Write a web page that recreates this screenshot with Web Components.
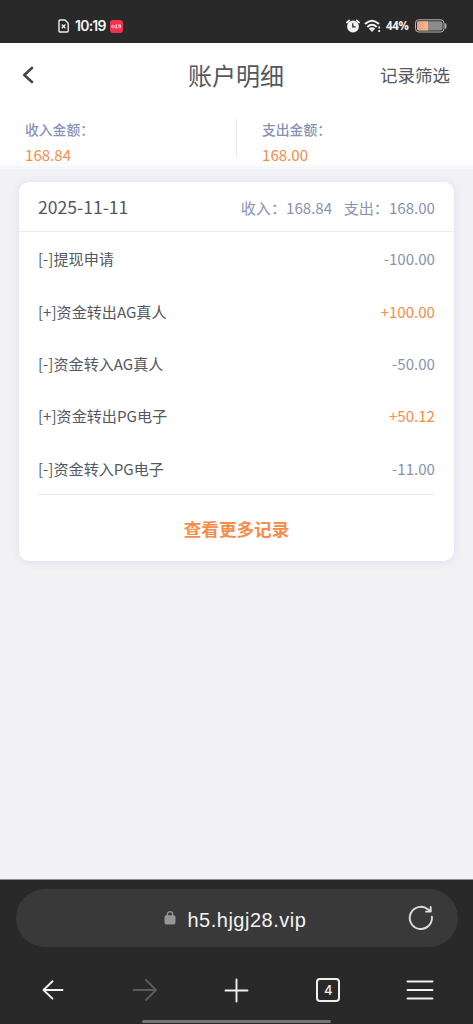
<!DOCTYPE html>
<html lang="zh-CN">
<head>
<meta charset="utf-8">
<meta name="viewport" content="width=device-width, initial-scale=1">
<title>账户明细</title>
<style>
html,body{margin:0;height:100%}
body{font-family:"Noto Sans CJK SC",sans-serif;background:#f2f2f5;color:#54575e;overflow:hidden;
--orange:#f58d4b;--muted:#8a92b4;--line:#ebebef}
</style>
</head>
<body>
<account-app></account-app>
<script>
function define(name, html) {
  const t = document.createElement('template');
  t.innerHTML = html;
  customElements.define(name, class extends HTMLElement {
    constructor() {
      super();
      this.attachShadow({ mode: 'open' }).appendChild(t.content.cloneNode(true));
    }
  });
}

define('status-bar', `
<style>
:host{display:flex;box-sizing:border-box;height:43px;background:#292929;color:#f4f4f4;align-items:center;padding:9px 26px 0 58px;font-family:Inter,sans-serif}
svg{display:block;flex:none}
.time{font-size:14px;font-weight:600;line-height:16px;margin-left:6px;width:31px;letter-spacing:-.75px;white-space:nowrap}
.app{width:13px;height:13px;border-radius:3px;background:#f3304f;margin-left:4px;display:flex;align-items:center;justify-content:center}
.pct{font:700 11.5px/14px "Open Sans",sans-serif;letter-spacing:-.3px;width:24px;margin-left:4px;white-space:nowrap}
.space{flex:1}
</style>
<svg width="11" height="14" viewBox="0 0 11 14" fill="none" stroke="#eee" stroke-width="1.4"><path d="M1 2.2Q1 1 2.2 1H7L10.2 4.2V11.8Q10.2 13 9 13H2.2Q1 13 1 11.8Z"/><path d="M3.8 5.4l3.6 3.8M7.4 5.4L3.8 9.2"/></svg>
<span class="time">10:19</span>
<span class="app"><svg width="11" height="5" viewBox="0 0 11 5" stroke="#fff" stroke-width=".8" fill="none" opacity=".9"><path d="M.8 1.5v2M2 .7v3.6M3.2 1.5v2M4.2 1h2M5.2 1v3M4 3.8h2.5M7 1.2h3M8 .7v3.6M9.5 1.2v2.7"/></svg></span>
<span class="space"></span>
<svg width="14" height="14" viewBox="0 0 14 14"><circle cx="7" cy="7.5" r="5.9" fill="#f4f4f4"/><path d="M.9 3.5L3.3 1.4M13.1 3.5L10.7 1.4" stroke="#f4f4f4" stroke-width="1.7" stroke-linecap="round"/><path d="M6.8 4.3v3.6h2.8" stroke="#292929" stroke-width="1.3" fill="none"/></svg>
<svg style="margin-left:4px" width="18" height="14" viewBox="0 0 18 14" fill="none" stroke="#f4f4f4" stroke-width="2"><path d="M1 5Q8 -1.5 15 5M3.3 7.9Q8 3.6 12.7 7.9M5.5 10.4Q8 8.4 10.5 10.4"/><path d="M6.1 10.8L8 13 9.9 10.8Z" fill="#f4f4f4" stroke="none"/><path d="M15.2 7.5v2M15.2 11v2" stroke-width="1.7"/></svg>
<span class="pct">44%</span>
<svg style="margin-left:4px" width="33" height="14" viewBox="0 0 33 14"><defs><linearGradient id="g"><stop stop-color="#ee9d91"/><stop offset="1" stop-color="#f1bb80"/></linearGradient></defs><rect x="1.5" y=".8" width="28.5" height="12.2" rx="3.3" fill="#292929" stroke="#b7b7b7"/><rect x="3" y="2.3" width="25.5" height="9.2" rx="2" fill="#8b8b8b"/><path d="M5 2.3H14v9.2H5q-2 0-2-2V4.3q0-2 2-2Z" fill="url(#g)"/><path d="M31.6 5v4" stroke="#aaa" stroke-width="1.6" stroke-linecap="round"/></svg>
`);

define('page-header', `
<style>
:host{display:grid;grid-template-columns:1fr auto 1fr;height:64px;align-items:center;padding:0 23px 0 22px;background:#fff}
svg{display:block}
.title{font-size:24px;line-height:36px;margin-top:-1px}
.action{font-size:17.5px;line-height:26px;justify-self:end}
</style>
<svg width="12" height="18" viewBox="0 0 12 18" fill="none" stroke="#43464f" stroke-width="2.6" stroke-linecap="round" stroke-linejoin="round"><path d="M10 2L2.2 9 10 16"/></svg>
<span class="title"><slot></slot></span><span class="action"><slot name="action"></slot></span>
`);

define('total-figure', `
<style>
:host{display:block;box-sizing:border-box;flex:1;padding:10px 0 0 25px}
.label{font-size:13.8px;font-weight:500;line-height:24px;color:var(--muted)}
.value{font-size:15.1px;line-height:26px;color:var(--orange)}
</style>
<div class="label"><slot name="label"></slot></div><div class="value"><slot></slot></div>
`);

define('totals-bar', `
<style>
:host{display:flex;height:60px;border-bottom:2px solid #f5f6fa;box-shadow:0 1px 3px #eef0f6;background:linear-gradient(#fff 54px,#f8f9fc)}
i{width:1px;height:38px;margin-top:12px;background:#e6e7ec}
</style>
<slot name="left"></slot><i></i><slot name="right"></slot>
`);

define('record-row', `
<style>
:host{display:flex;justify-content:space-between;align-items:center;height:52.4px;font-size:15.1px;line-height:22px}
.amount{color:var(--muted)}
:host([income]) .amount{color:var(--orange)}
</style>
<span><slot></slot></span><span class="amount"><slot name="amount"></slot></span>
`);

define('day-card', `
<style>
:host{display:block;box-sizing:border-box;margin:13px 19px 0;height:379px;background:#fff;border-radius:10px;box-shadow:0 1px 8px #dcdceb}
header{display:flex;box-sizing:border-box;justify-content:space-between;align-items:center;height:50px;padding:1px 19px 0;border-bottom:1.5px solid var(--line)}
.date{font-size:17.6px;line-height:26px}
.sum{font-size:15.1px;line-height:22px;color:var(--muted);display:flex;gap:11.5px}
.rows{padding:0 19px}
.more{box-sizing:border-box;margin:0 19px;border-top:1.6px solid var(--line);height:69px;display:flex;align-items:center;justify-content:center;color:var(--orange);font-size:17.6px;font-weight:700}
</style>
<header><span class="date"><slot name="date"></slot></span><span class="sum"><slot name="in"></slot><slot name="out"></slot></span></header>
<div class="rows"><slot></slot></div>
<div class="more"><slot name="more"></slot></div>
`);

define('address-bar', `
<style>
:host{display:flex;box-sizing:border-box;height:58px;margin:0 15.5px;border-radius:29px;background:#393939;align-items:center;padding:0 24px 0 148px}
svg{display:block;flex:none}
.url{font-family:"Liberation Sans",Arial,sans-serif;font-size:20px;letter-spacing:.5px;line-height:26px;color:#f4f4f4;margin:3px auto 0 12px;white-space:nowrap}
</style>
<svg width="12" height="14" viewBox="0 0 12 14"><rect x=".5" y="4.3" width="11" height="9.2" rx="1.8" fill="#969696"/><path d="M3.4 5V3.3a2.6 2.6 0 0 1 5.2 0V5" fill="none" stroke="#969696" stroke-width="1.3"/></svg>
<span class="url"><slot></slot></span>
<svg width="26" height="26" viewBox="0 0 26 26" fill="none" stroke="#dedede" stroke-width="1.9" stroke-linecap="round" stroke-linejoin="round"><path d="M23.9 11.8A11.1 11.1 0 1 1 20 4.4L22.3 6"/><path d="M22.7 2V6.6H18"/></svg>
`);

define('browser-chrome', `
<style>
:host{display:block;box-sizing:border-box;height:145px;background:#292929;border-top:1px solid #8e8e92;padding-top:9px;flex:none}
nav{display:grid;grid-template-columns:repeat(5,91.8px);justify-content:center;justify-items:center;align-items:center;height:86px}
svg{display:block;fill:none;stroke:#f0f0f0;stroke-width:1.9;stroke-linecap:round;stroke-linejoin:round}
.tabs{width:24px;height:24px;box-sizing:border-box;border:2px solid #f0f0f0;border-radius:4px;color:#f0f0f0;font:500 13px/20px Inter,sans-serif;text-align:center}
.home{width:189px;height:3px;border-radius:2px;background:#747474;margin:-13px auto 0}
</style>
<slot></slot>
<nav>
<svg width="22" height="22" viewBox="0 0 22 22"><path d="M20.5 11H1.5M10.5 2.2L1.5 11 10.5 19.6"/></svg>
<svg width="26" height="24" viewBox="0 0 26 24" style="stroke:#5c5c5c"><path d="M1.5 12H24M14 2L24 12 14 22"/></svg>
<svg width="25" height="25" viewBox="0 0 25 25"><path d="M1.5 12.5h22M12.5 1.5v22"/></svg>
<span class="tabs">4</span>
<svg width="28" height="22" viewBox="0 0 28 22"><path d="M1.5 2.5h25M1.5 11h25M1.5 19.5h25"/></svg>
</nav>
<div class="home"></div>
`);

define('account-app', `
<style>
:host{display:flex;flex-direction:column;height:1024px}
main{flex:1;min-height:0}
</style>
<status-bar></status-bar>
<page-header>账户明细<span slot="action">记录筛选</span></page-header>
<totals-bar>
<total-figure slot="left"><span slot="label">收入金额：</span>168.84</total-figure>
<total-figure slot="right"><span slot="label">支出金额：</span>168.00</total-figure>
</totals-bar>
<main>
<day-card>
<span slot="date">2025-11-11</span><span slot="in">收入：168.84</span><span slot="out">支出：168.00</span>
<record-row>[-]提现申请<span slot="amount">-100.00</span></record-row>
<record-row income>[+]资金转出AG真人<span slot="amount">+100.00</span></record-row>
<record-row>[-]资金转入AG真人<span slot="amount">-50.00</span></record-row>
<record-row income>[+]资金转出PG电子<span slot="amount">+50.12</span></record-row>
<record-row>[-]资金转入PG电子<span slot="amount">-11.00</span></record-row>
<span slot="more">查看更多记录</span>
</day-card>
</main>
<browser-chrome><address-bar>h5.hjgj28.vip</address-bar></browser-chrome>
`);
</script>
</body>
</html>
